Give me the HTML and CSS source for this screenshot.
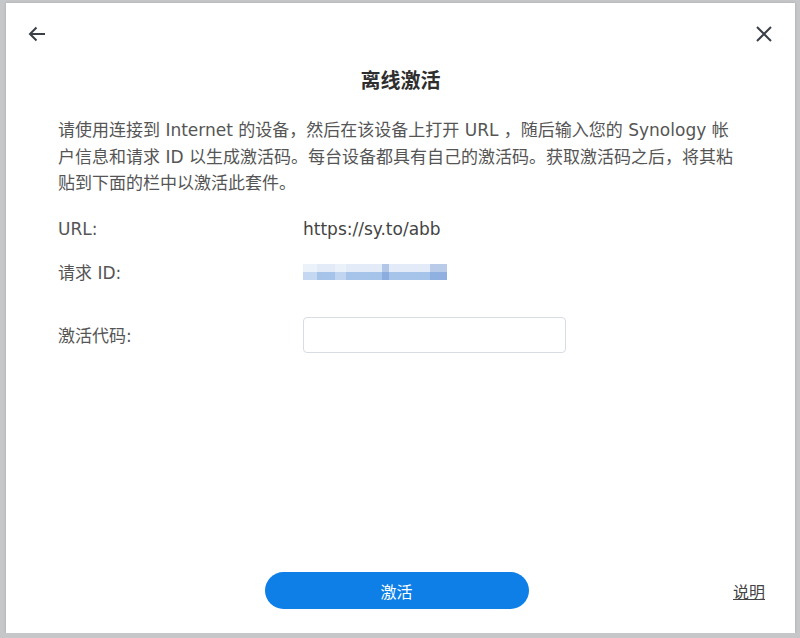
FILE: index.html
```html
<!DOCTYPE html>
<html lang="zh-CN">
<head>
  <meta charset="UTF-8">
  <meta name="viewport" content="width=device-width, initial-scale=1.0">
  <title>离线激活</title>
  <link rel="stylesheet" href="styles.css">
</head>
<body>
  <div class="dialog">
    <div class="topbar">
      <button class="icon-button" aria-label="返回">
        <svg width="20" height="20" viewBox="0 0 20 20"><path d="M18 10H3M9.5 3.5L3 10l6.5 6.5" fill="none" stroke="#3a3f48" stroke-width="2"/></svg>
      </button>
      <button class="icon-button" aria-label="关闭">
        <svg width="18" height="18" viewBox="0 0 18 18"><path d="M2 2l14 14M16 2L2 16" fill="none" stroke="#3a3f48" stroke-width="2"/></svg>
      </button>
    </div>

    <h1 class="title">离线激活</h1>

    <p class="intro">请使用连接到 Internet 的设备，然后在该设备上打开 URL ，随后输入您的 Synology 帐<br>户信息和请求 ID 以生成激活码。每台设备都具有自己的激活码。获取激活码之后，将其粘<br>贴到下面的栏中以激活此套件。</p>

    <div class="fields">
      <div class="field-row">
        <span class="field-label">URL:</span>
        <span class="field-value">https://sy.to/abb</span>
      </div>
      <div class="field-row">
        <span class="field-label">请求 ID:</span>
        <span class="request-id"></span>
      </div>
      <div class="field-row field-row-input">
        <span class="field-label">激活代码:</span>
        <input type="text" class="code-input">
      </div>
    </div>

    <div class="footer">
      <span></span>
      <button class="activate-button">激活</button>
      <a class="help-link" href="#">说明</a>
    </div>
  </div>
</body>
</html>
```

FILE: styles.css
```css
body {
  margin: 0;
  padding: 0;
  background-color: #c6c7c9;
  font-family: "DejaVu Sans", "Noto Sans CJK SC", sans-serif;
  color: #555;
}

.dialog {
  margin: 3px 5px 0 6px;
  height: 630px;
  background: #fff;
  display: flex;
  flex-direction: column;
  box-shadow: 0 0 3px rgba(0,0,0,0.15);
}

.topbar {
  height: 62px;
  display: flex;
  justify-content: space-between;
  align-items: center;
  padding: 0 21px;
}

.icon-button {
  border: none;
  background: none;
  padding: 0;
  width: 20px;
  height: 20px;
  display: flex;
  align-items: center;
  justify-content: center;
  cursor: pointer;
}

.title {
  margin: 0;
  font-size: 20px;
  line-height: 30px;
  font-weight: bold;
  text-align: center;
  color: #2e2e2e;
  font-family: "Noto Sans CJK SC", sans-serif;
}

.intro {
  margin: 22px 0 0 52px;
  font-size: 17px;
  line-height: 26.5px;
}

.fields {
  margin: 14px 0 0 52px;
  font-size: 17px;
}

.field-row {
  display: flex;
  align-items: center;
  height: 36px;
  margin-bottom: 7px;
}

.field-row-input {
  margin-top: 27px;
}

.field-label {
  width: 245px;
}

.field-value {
  color: #444;
}

.request-id {
  width: 144px;
  height: 16px;
  background:
    linear-gradient(90deg, rgba(255,255,255,0.35) 0 10%, transparent 10% 22%, rgba(255,255,255,0.3) 22% 30%, transparent 30% 55%, rgba(90,130,200,0.35) 55% 60%, transparent 60% 88%, rgba(90,130,200,0.3) 88% 100%),
    linear-gradient(180deg, #e2ebf7 0 48%, #a6c3ea 48% 100%);
  filter: blur(0.6px);
}

.code-input {
  width: 263px;
  height: 36px;
  box-sizing: border-box;
  border: 1px solid #d8dde3;
  border-radius: 4px;
  outline: none;
}

.footer {
  margin-top: auto;
  margin-bottom: 24px;
  padding-right: 8px;
  display: grid;
  grid-template-columns: 1fr 264px 1fr;
  align-items: center;
}

.activate-button {
  height: 37px;
  border: none;
  border-radius: 19px;
  background: #0d7fe6;
  color: #fff;
  font-size: 16px;
  font-family: "Noto Sans CJK SC", sans-serif;
  cursor: pointer;
}

.help-link {
  justify-self: end;
  margin-right: 22px;
  font-size: 16px;
  color: #444;
  font-family: "Noto Sans CJK SC", sans-serif;
}
```
